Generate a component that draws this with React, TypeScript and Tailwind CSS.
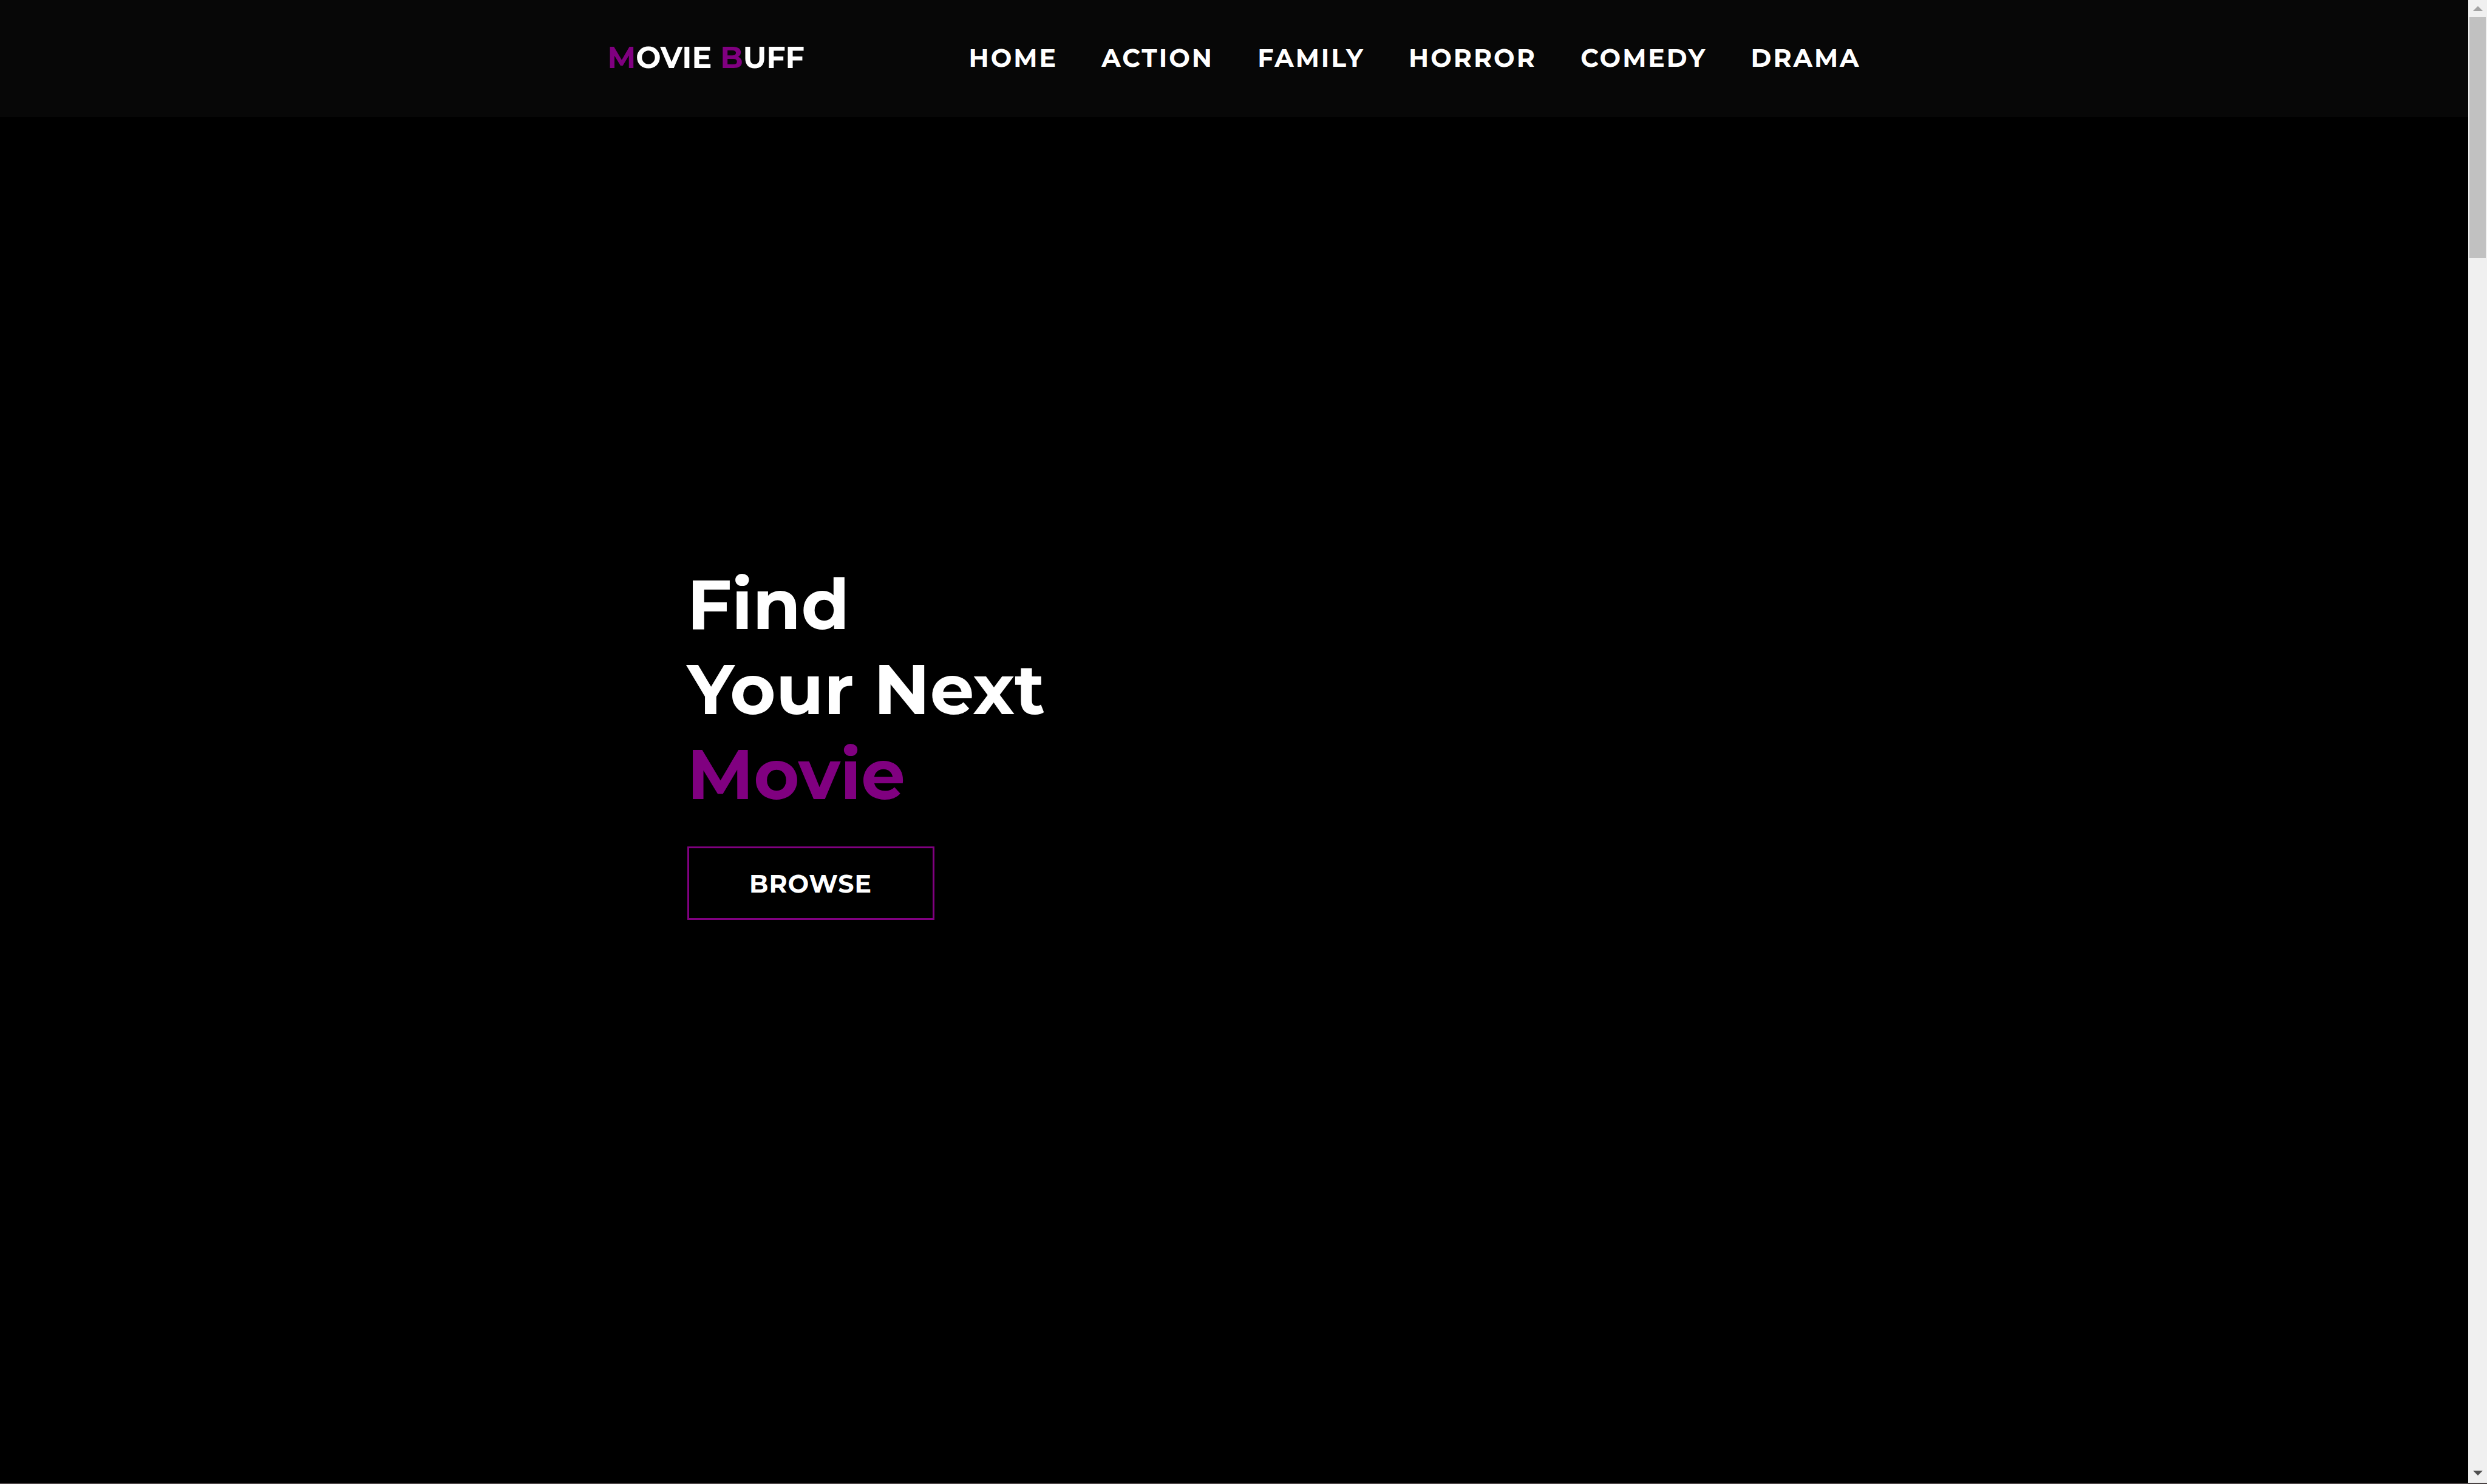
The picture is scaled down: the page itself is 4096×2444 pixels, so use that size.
const links = ["HOME", "ACTION", "FAMILY", "HORROR", "COMEDY", "DRAMA"];

function Header() {
  return (
    <header className="flex h-[193px] items-center justify-center bg-[#070707] pb-1">
      <div className="flex w-full max-w-[2064px] items-center justify-between">
        <a href="#home" className="text-[49px] leading-[60px] text-white">
          <span className="text-[#800080]">M</span>OVIE <span className="text-[#800080]">B</span>UFF
        </a>
        <nav aria-label="Genres" className="w-[1469px]">
          <ul className="flex justify-between text-[41px] leading-[60px] tracking-[3px] text-white">
            {links.map((label) => (
              <li key={label}>
                <a href={`#${label.toLowerCase()}`}>{label}</a>
              </li>
            ))}
          </ul>
        </nav>
      </div>
    </header>
  );
}

function Hero() {
  return (
    <main className="flex flex-1 justify-center">
      <div className="flex w-full max-w-[1802px] flex-col items-start pt-[732px]">
        <h1 className="text-[115px] leading-[140px] text-white">
          Find
          <br />
          Your Next
          <br />
          <span className="text-[#800080]">Movie</span>
        </h1>
        <button
          type="button"
          className="mt-[49px] h-[121px] w-[407px] border-3 border-[#800080] text-[41px] leading-[60px] tracking-[1px] text-white"
        >
          BROWSE
        </button>
      </div>
    </main>
  );
}

function ScrollRail() {
  return (
    <aside aria-hidden="true" className="flex w-[31px] flex-col items-center bg-[#f0f0f0]">
      <div className="flex h-7 items-center">
        <svg width="16" height="8" viewBox="0 0 16 8">
          <path d="M8 0 16 8H0z" fill="#a3a3a3" />
        </svg>
      </div>
      <div className="h-[397px] w-[27px] bg-[#c1c1c1]" />
      <div className="mt-auto flex h-8 items-center">
        <svg width="16" height="8" viewBox="0 0 16 8">
          <path d="M0 0H16L8 8z" fill="#505050" />
        </svg>
      </div>
    </aside>
  );
}

export default function App() {
  return (
    <div className="flex min-h-screen flex-col bg-black font-['Montserrat','Inter',sans-serif] font-bold">
      <div className="flex flex-1">
        <div className="flex flex-1 flex-col">
          <Header />
          <Hero />
        </div>
        <ScrollRail />
      </div>
      <div className="h-0.5 bg-[#4a4344]" />
    </div>
  );
}
